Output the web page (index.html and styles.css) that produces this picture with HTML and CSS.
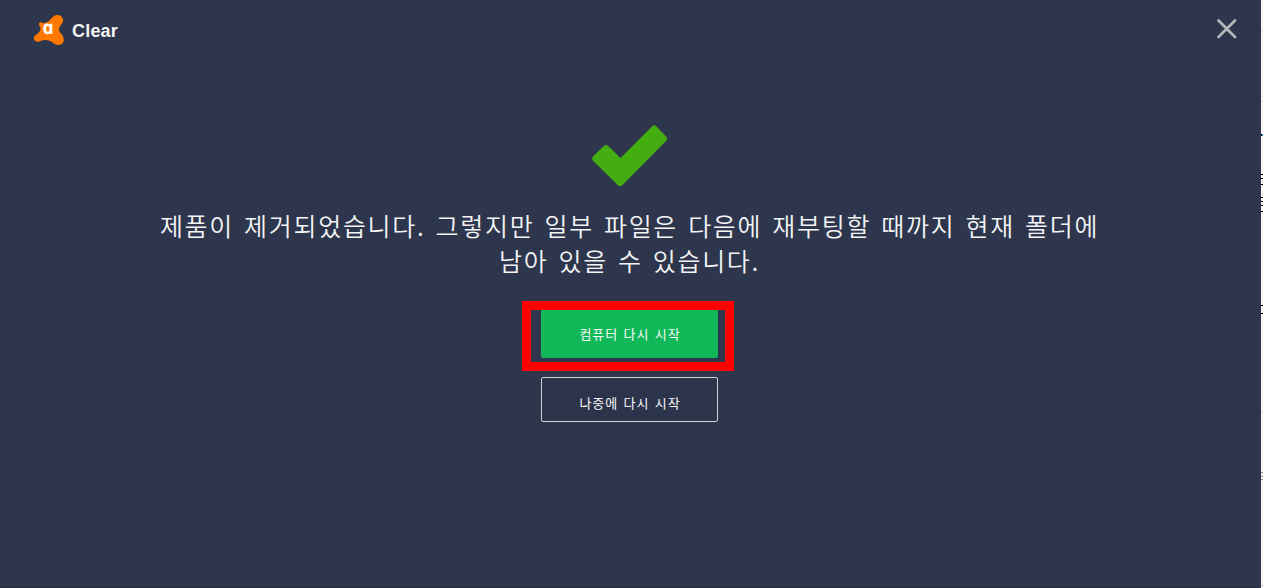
FILE: index.html
```
<!DOCTYPE html>
<html lang="ko">
<head>
    <meta charset="UTF-8">
    <meta name="viewport" content="width=device-width, initial-scale=1.0">
    <title>Clear</title>
    <link rel="stylesheet" href="styles.css">
</head>
<body>
    <div class="window">
        <header class="titlebar">
            <div class="brand">
                <svg class="logo" viewBox="0 0 32 32">
                    <path fill="#ff7800" d="M10.500 9.200 C15 9 17 5.500 20 2.700 C23 0 28 0.500 29.800 4.500 C31.500 9 26.500 11 26 15 C25.500 19 31.800 21 30.700 27 C29.700 31.500 24 32 21 29.500 C18 27 15 25.500 11 26 C8 26.500 6 28.300 3.500 27.500 C0 26.500 0.200 22.800 2.500 21.200 C6 19 7.700 17 7.500 14 C7.400 12 5 11 6.300 9 C7.500 7.300 9.300 8.700 10.500 9.200 Z"/>
                    <text class="logo-letter" transform="translate(10.500 20) skewX(12)">a</text>
                </svg>
                <span class="brand-name">Clear</span>
            </div>
            <button class="close" aria-label="닫기">
                <svg width="20" height="20" viewBox="0 0 20 20">
                    <path d="M1.500 1.500 L18 18 M18 1.500 L1.500 18" stroke="#b4b6b9" stroke-width="2.700" stroke-linecap="round"/>
                </svg>
            </button>
        </header>

        <main class="content">
            <svg class="check" viewBox="0 0 76 62">
                <path fill="#44ad12" d="M0.800 31.800 L12 20.700 Q14 19.300 16 20.700 L28.500 33 L60.500 1 Q62.300 -0.500 64 1 L74.500 12 Q75.700 13.500 74.500 15.500 L30 60.500 Q28.200 62 26.200 60.500 L0.800 35.500 Q-0.500 33.500 0.800 31.800 Z"/>
            </svg>
            <h1 class="message">제품이 제거되었습니다. 그렇지만 일부 파일은 다음에 재부팅할 때까지 현재 폴더에<br>남아 있을 수 있습니다.</h1>
            <div class="highlight">
                <button class="button primary">컴퓨터 다시 시작</button>
            </div>
            <button class="button secondary">나중에 다시 시작</button>
        </main>
    </div>

    <!-- Edge of the page behind the window -->
    <svg class="behind" width="2" height="588" viewBox="0 0 2 588">
        <path stroke="#000" d="M0 174.500h2 M0 178.500h2 M0 184.500h2 M0 197.500h2 M0 201.500h2 M0 205.500h2 M0 211.500h2 M0 305.500h2 M0 313.500h2"/>
        <path stroke="#000" stroke-width="2" d="M0 135h1"/>
        <path stroke="#1495d8" stroke-width="2" d="M1 135h1"/>
        <path stroke="#999" d="M0 472.500h2 M0 476.500h2 M0 479.500h2 M1 585.500h1"/>
        <path stroke="#d5d5d5" d="M0 30.500h2 M0 101.500h2 M0 412.500h2"/>
    </svg>
</body>
</html>
```
FILE: styles.css
```
* {
    margin: 0;
    padding: 0;
    box-sizing: border-box;
}

body {
    display: flex;
    height: 588px;
    overflow: hidden;
    background: #f9f9f9;
    font-family: 'Noto Sans CJK KR', sans-serif;
    color: #f4f4f5;
}

.window {
    width: 1261px;
    height: 588px;
    background: #2e364d;
    border-bottom: 1px solid #292d40;
}

.titlebar {
    display: flex;
    justify-content: space-between;
    height: 60px;
    padding: 14px 24px 0 33px;
}

.brand {
    display: flex;
    align-items: flex-start;
}

.logo {
    width: 32px;
    height: 32px;
}

.logo-letter {
    font: italic bold 19px 'Open Sans', sans-serif;
    fill: #fff;
}

.brand-name {
    margin-left: 7px;
    font: bold 18px/34px 'Liberation Sans', sans-serif;
    letter-spacing: 0.2px;
}

.close {
    width: 20px;
    height: 20px;
    margin-top: 5px;
    border: none;
    background: none;
    cursor: pointer;
}

.content {
    display: flex;
    flex-direction: column;
    align-items: center;
    padding: 65px 2px 0 0;
}

.check {
    width: 76px;
    height: 62px;
}

.message {
    height: 70px;
    margin-top: 21px;
    font-size: 25px;
    font-weight: 350;
    line-height: 35px;
    letter-spacing: 1.7px;
    word-spacing: 1.4px;
    text-align: center;
    white-space: nowrap;
}

.highlight {
    display: flex;
    justify-content: center;
    width: 212px;
    height: 70px;
    margin: 23px 0 6px -3px;
    border: 9px solid #f00;
}

.button {
    width: 177px;
    border-radius: 2px;
    font-family: inherit;
    font-size: 13px;
    font-weight: 400;
    letter-spacing: 0.9px;
    word-spacing: 1px;
    color: #f8f8f8;
    cursor: pointer;
}

.primary {
    height: 48px;
    margin-left: 3px;
    padding: 0 0 2px 1px;
    border: none;
    border-radius: 0 0 2px 2px;
    background: #10b857;
}

.secondary {
    height: 45px;
    padding: 5px 0 0 1px;
    border: 1px solid #d0d3d5;
    background: #2c344b;
}

.behind {
    width: 2px;
    height: 588px;
}
```
